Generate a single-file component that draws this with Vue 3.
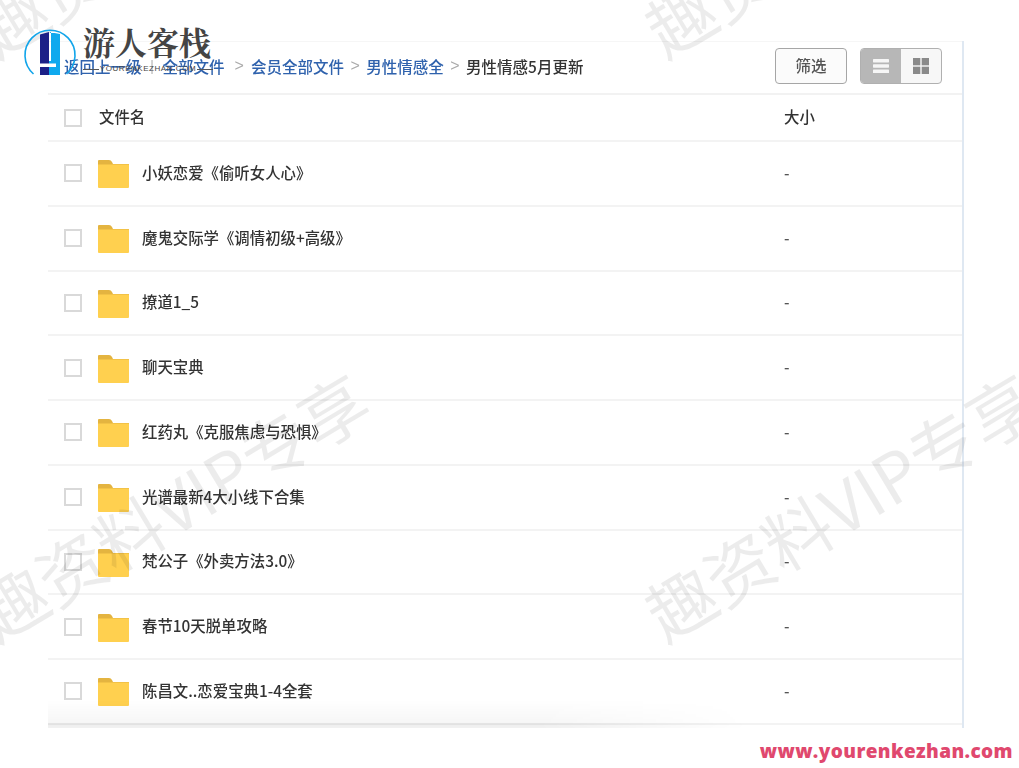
<template>
  <div class="page">
    <div class="panel">
      <div class="toolbar">
        <div class="crumbs">
          <a class="link">返回上一级</a>
          <span class="divider">|</span>
          <a class="link">全部文件</a>
          <span class="arrow first">&gt;</span>
          <a class="link">会员全部文件</a>
          <span class="arrow">&gt;</span>
          <a class="link">男性情感全</a>
          <span class="arrow">&gt;</span>
          <span class="current">男性情感5月更新</span>
        </div>
        <button class="filter-btn">筛选</button>
        <div class="view-toggle">
          <span class="toggle-item active">
            <svg width="16" height="16" viewBox="0 0 16 16">
              <rect y="1" width="16" height="3.4" rx="0.6" fill="#f6f6f6" />
              <rect y="6.3" width="16" height="3.4" rx="0.6" fill="#f6f6f6" />
              <rect y="11.6" width="16" height="3.4" rx="0.6" fill="#f6f6f6" />
            </svg>
          </span>
          <span class="toggle-item">
            <svg width="16" height="16" viewBox="0 0 16 16">
              <rect width="7.3" height="7.3" fill="#8a8a8a" />
              <rect x="8.7" width="7.3" height="7.3" fill="#8a8a8a" />
              <rect y="8.7" width="7.3" height="7.3" fill="#8a8a8a" />
              <rect x="8.7" y="8.7" width="7.3" height="7.3" fill="#8a8a8a" />
            </svg>
          </span>
        </div>
      </div>

      <div class="row head">
        <span class="check"></span>
        <span class="name-head">文件名</span>
        <span class="size">大小</span>
      </div>

      <div v-for="item in files" :key="item" class="row">
        <span class="check"></span>
        <svg class="folder" width="31" height="28" viewBox="0 0 31 28">
          <path d="M0 1Q0 0 1 0H11Q13 0 14 2L15 4H31V10H0Z" fill="#e4b440" />
          <path d="M0 4.500H31V27Q31 28 30 28H1Q0 28 0 27Z" fill="#ffd04f" />
        </svg>
        <span class="name">{{ item }}</span>
        <span class="size dash">-</span>
      </div>

      <div class="bottom-shade"></div>
    </div>

    <div class="mark mark-a">趣资料VIP专享</div>
    <div class="mark mark-b">趣资料VIP专享</div>
    <div class="mark mark-c">趣资料VIP专享</div>
    <div class="mark mark-d">趣资料VIP专享</div>

    <div class="logo">
      <svg width="54" height="54" viewBox="0 0 54 54">
        <path d="M10.500 50A25 25 0 1 1 43.500 50" fill="none" stroke="#12a5ea" stroke-width="1.600" />
        <path d="M17 51V10.500L26 8V39.500H17V43H26V51Z" fill="#1c2087" />
        <path d="M26 8L37 10V51H26V43H33V39.500H26V37H28V8Z" fill="#0fa9ee" />
      </svg>
      <div class="logo-text">
        <div class="logo-name">游人客栈</div>
        <div class="logo-sub"><i></i><span>YOURENKEZHAN.COM</span><i></i></div>
      </div>
    </div>

    <div class="site">www.yourenkezhan.com</div>
  </div>
</template>

<script setup>
const files = [
  '小妖恋爱《偷听女人心》',
  '魔鬼交际学《调情初级+高级》',
  '撩道1_5',
  '聊天宝典',
  '红药丸《克服焦虑与恐惧》',
  '光谱最新4大小线下合集',
  '梵公子《外卖方法3.0》',
  '春节10天脱单攻略',
  '陈昌文..恋爱宝典1-4全套',
]
</script>

<style>
body {
  margin: 0;
  background: #fff;
}
</style>

<style scoped>
.page {
  position: relative;
  width: 1019px;
  height: 768px;
  overflow: hidden;
  padding: 41px 0 0 48px;
  box-sizing: border-box;
  background: #fff;
  font-family: "Noto Sans CJK SC", "Noto Sans", sans-serif;
  font-weight: 500;
  color: #333;
}

.panel {
  position: relative;
  width: 916px;
  height: 687px;
  box-sizing: border-box;
  border-right: 2px solid #dfe8f2;
  overflow: hidden;
  filter: blur(0.4px);
}

.toolbar {
  height: 54px;
  box-sizing: border-box;
  display: flex;
  align-items: center;
  padding: 0 20px 3px 16px;
  border-top: 1px solid #f6f6f6;
  border-bottom: 2px solid #f2f2f2;
}

.crumbs {
  flex: 1;
  display: flex;
  align-items: center;
  font-size: 15.500px;
  padding-bottom: 1px;
}

.link {
  color: #2f62ad;
}

.divider {
  color: #bbb;
  margin: 0 8.500px;
  width: 4px;
  font-family: "Liberation Sans", sans-serif;
}

.arrow {
  color: #aaa;
  font-family: "Liberation Sans", sans-serif;
  font-size: 16px;
  margin: 0 6.500px;
}

.arrow.first {
  margin: 0 7px 0 10px;
}

.current {
  color: #333;
}

.filter-btn {
  width: 72px;
  height: 36px;
  margin-right: 13px;
  box-sizing: border-box;
  border: 1.500px solid #a6a6a6;
  border-radius: 4px;
  background: #fbfbfb;
  color: #555;
  font-family: inherit;
  font-weight: 500;
  font-size: 15.500px;
  padding: 0 0 2px;
}

.view-toggle {
  width: 82px;
  height: 36px;
  box-sizing: border-box;
  display: flex;
  border: 1.500px solid #b0b0b0;
  border-radius: 4px;
  overflow: hidden;
  background: #f7f7f7;
}

.toggle-item {
  flex: 1;
  display: flex;
  align-items: center;
  justify-content: center;
}

.toggle-item.active {
  background: #b7b7b7;
}

.row {
  height: 64.750px;
  box-sizing: border-box;
  display: flex;
  align-items: center;
  padding-left: 16px;
  border-bottom: 2px solid #f3f3f3;
  font-size: 15.400px;
}

.row.head {
  height: 47px;
}

.check {
  width: 18px;
  height: 18px;
  box-sizing: border-box;
  border: 2px solid #d9d9d9;
  background: #fff;
  flex: none;
}

.folder {
  flex: none;
  margin-left: 16px;
  margin-top: 2px;
}

.name-head {
  margin-left: 17px;
  margin-bottom: 3px;
  width: 685px;
  flex: none;
}

.name {
  margin-left: 13px;
  margin-bottom: 3px;
  width: 642px;
  flex: none;
}

.size {
  margin-bottom: 3px;
}

.dash {
  color: #555;
}

.bottom-shade {
  position: absolute;
  left: 0;
  bottom: 0;
  width: 700px;
  height: 28px;
  background: linear-gradient(to bottom, rgba(0, 0, 0, 0) 0%, rgba(0, 0, 0, 0.035) 82%, rgba(0, 0, 0, 0.07) 85%, rgba(0, 0, 0, 0.05) 100%);
  -webkit-mask-image: linear-gradient(to right, #000 70%, transparent 100%);
  mask-image: linear-gradient(to right, #000 70%, transparent 100%);
}

.mark {
  position: absolute;
  font-family: "Noto Sans CJK SC", sans-serif;
  font-size: 68px;
  font-weight: 400;
  line-height: 1;
  white-space: nowrap;
  color: rgba(0, 0, 0, 0.075);
  transform-origin: left bottom;
  transform: rotate(-31deg);
  pointer-events: none;
}

.mark-a {
  left: 0;
  top: 580px;
}

.mark-b {
  left: 668px;
  top: 580px;
}

.mark-c {
  left: 0;
  top: -4px;
}

.mark-d {
  left: 668px;
  top: -4px;
}

.logo {
  position: absolute;
  left: 23px;
  top: 24px;
  display: flex;
  gap: 6px;
}

.logo-text {
  width: 130px;
}

.logo-name {
  font-family: "Liberation Serif", "Noto Serif CJK SC", "Noto Sans CJK SC", serif;
  font-size: 32px;
  line-height: 40px;
  font-weight: 700;
  color: #444;
}

.logo-sub {
  display: flex;
  align-items: center;
  gap: 1px;
  font-size: 8px;
  line-height: 10px;
  letter-spacing: 0.550px;
  color: #444;
  font-weight: 400;
  font-family: "Liberation Sans", sans-serif;
}

.logo-sub i {
  flex: 1;
  height: 1px;
  background: #555;
}

.site {
  position: absolute;
  right: 6px;
  top: 738px;
  font-family: "Open Sans", sans-serif;
  font-weight: 800;
  font-size: 19px;
  line-height: 26px;
  letter-spacing: 0.400px;
  color: #e0486e;
}
</style>
